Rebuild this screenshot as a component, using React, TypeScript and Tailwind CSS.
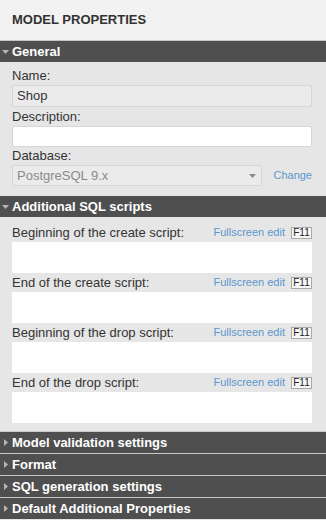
import React from "react";

function Tri({ open }: { open: boolean }) {
  return (
    <div className="w-3 flex items-center justify-center shrink-0">
      {open ? (
        <svg width="7" height="4" viewBox="0 0 7 4" className="-ml-[2px]">
          <path d="M0 0h7L3.5 4z" fill="#b5b5b5" />
        </svg>
      ) : (
        <svg width="4" height="7" viewBox="0 0 4 7" className="-ml-[1px]">
          <path d="M0 0v7l4-3.5z" fill="#b5b5b5" />
        </svg>
      )}
    </div>
  );
}

function Header({ title, open }: { title: string; open: boolean }) {
  return (
    <div className="h-[21px] bg-[#4f4f4f] flex items-center text-white font-bold text-[13px] leading-none">
      <Tri open={open} />
      <span>{title}</span>
    </div>
  );
}

function Collapsed({ title }: { title: string }) {
  return (
    <div className="border-t border-[#c9c9c9]">
      <Header title={title} open={false} />
    </div>
  );
}

function ScriptBlock({ label }: { label: string }) {
  return (
    <div className="flex flex-col">
      <div className="h-[19px] flex items-center justify-between">
        <span className="text-[13px] text-[#333]">{label}</span>
        <div className="flex items-center gap-[6px]">
          <span className="text-[11px] text-[#5b97cf]">Fullscreen edit</span>
          <span className="h-[12px] w-[21px] border border-[#a9a9a9] bg-[#f7f7f7] text-[10px] leading-none text-[#222] flex items-center justify-center">
            F11
          </span>
        </div>
      </div>
      <div className="h-[31px] bg-white" />
    </div>
  );
}

export default function App() {
  return (
    <div className="w-[326px] h-[520px] overflow-hidden bg-[#e6e6e6] font-['Liberation_Sans',Arial,sans-serif]">
      <div className="h-[41px] bg-[#f2f2f2] border-b border-[#c6c6c6] flex items-center px-3 text-[13px] font-bold text-[#333]">
        MODEL PROPERTIES
      </div>
      <Header title="General" open={true} />
      <div className="pl-3 pr-[14px] pt-1 pb-[10px] flex flex-col text-[13px] text-[#333]">
        <div className="h-[19px] flex items-center">Name:</div>
        <div className="h-[22px] rounded-[2px] border border-[#d6d6d6] bg-[#ebebeb] flex items-center px-[4px]">
          Shop
        </div>
        <div className="h-[19px] flex items-center">Description:</div>
        <div className="h-[21px] rounded-[2px] border border-[#d6d6d6] bg-white" />
        <div className="h-[18px] flex items-center">Database:</div>
        <div className="h-[21px] flex items-center">
          <div className="w-[250px] h-[21px] rounded-[2px] border border-[#d6d6d6] bg-[#ebebeb] flex items-center justify-between pl-[4px] pr-[5px] text-[#8a8a8a]">
            <span>PostgreSQL 9.x</span>
            <svg width="7" height="4" viewBox="0 0 7 4">
              <path d="M0 0h7L3.5 4z" fill="#8a8a8a" />
            </svg>
          </div>
          <span className="ml-auto text-[11px] text-[#5b97cf]">Change</span>
        </div>
      </div>
      <Header title="Additional SQL scripts" open={true} />
      <div className="pl-3 pr-[14px] pt-[6px] pb-[8px] flex flex-col">
        <ScriptBlock label="Beginning of the create script:" />
        <ScriptBlock label="End of the create script:" />
        <ScriptBlock label="Beginning of the drop script:" />
        <ScriptBlock label="End of the drop script:" />
      </div>
      <Collapsed title="Model validation settings" />
      <Collapsed title="Format" />
      <Collapsed title="SQL generation settings" />
      <Collapsed title="Default Additional Properties" />
    </div>
  );
}
